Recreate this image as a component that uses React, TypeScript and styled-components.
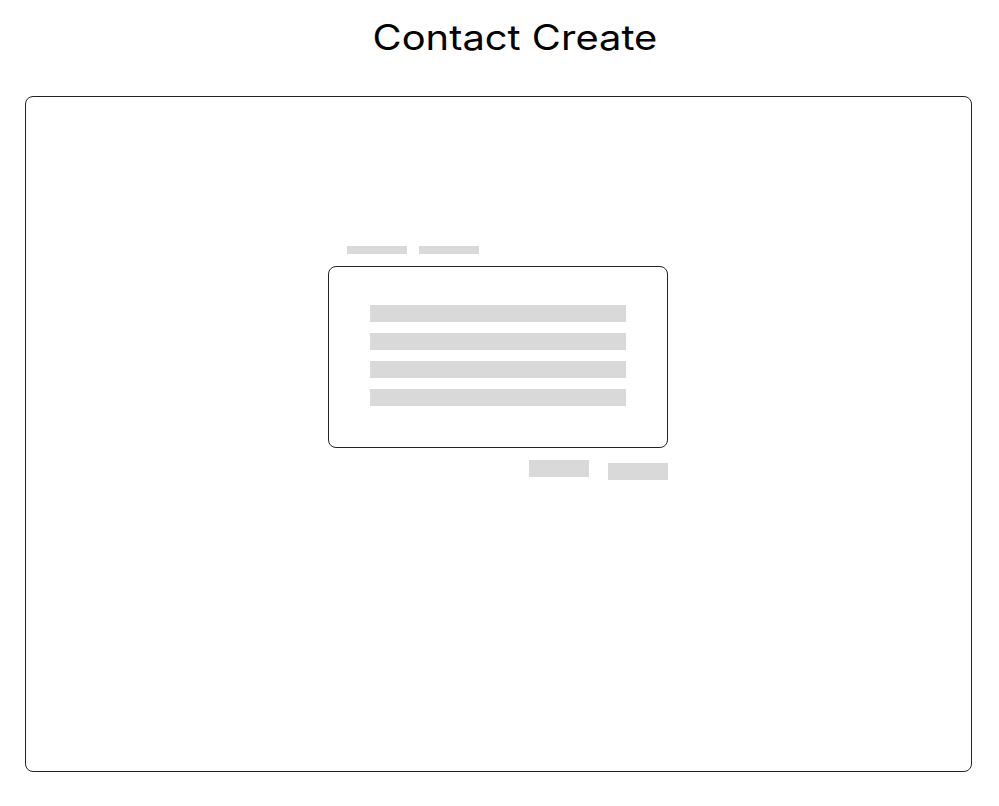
import React from "react";
import styled, { createGlobalStyle } from "styled-components";

const Global = createGlobalStyle`
  html, body { margin: 0; padding: 0; background: #ffffff; }
  body { font-family: Inter, "Noto Sans", sans-serif; color: #000; }
`;

const Page = styled.div`
  width: 999px;
  height: 806px;
  display: flex;
  flex-direction: column;
  overflow: hidden;
`;

const Title = styled.h1`
  align-self: center;
  margin: 15px 0 37px 31px;
  font-family: Inter, sans-serif;
  font-size: 35px;
  font-weight: 400;
  line-height: 44px;
  white-space: nowrap;
  color: #000;
  transform: scaleX(1.14);
  transform-origin: 50% 50%;
`;

const Frame = styled.div`
  box-sizing: border-box;
  margin-left: 25px;
  width: 947px;
  height: 676px;
  border: 1px solid #222;
  border-radius: 8px;
  display: flex;
  justify-content: flex-start;
  padding: 149px 0 0 302px;
`;

const Form = styled.div`
  width: 340px;
  display: flex;
  flex-direction: column;
`;

const TabRow = styled.div`
  display: flex;
  gap: 12px;
  padding-left: 19px;
  margin-bottom: 12px;
`;

const Bar = styled.div<{ $w: number; $h: number; $top?: number }>`
  width: ${(p) => p.$w}px;
  height: ${(p) => p.$h}px;
  margin-top: ${(p) => p.$top ?? 0}px;
  background: #d9d9d9;
  flex: none;
`;

const Card = styled.div`
  box-sizing: border-box;
  height: 182px;
  border: 1px solid #222;
  border-radius: 8px;
  padding: 38px 41px 0;
  display: flex;
  flex-direction: column;
  gap: 11px;
`;

const Field = styled.div`
  height: 17px;
  background: #d9d9d9;
`;

const Actions = styled.div`
  display: flex;
  justify-content: flex-end;
  align-items: flex-start;
  gap: 19px;
  margin-top: 12px;
`;

export default function App() {
  return (
    <>
      <Global />
      <Page>
        <Title>Contact Create</Title>
        <Frame>
          <Form>
            <TabRow>
              <Bar $w={60} $h={8} />
              <Bar $w={60} $h={8} />
            </TabRow>
            <Card>
              <Field />
              <Field />
              <Field />
              <Field />
            </Card>
            <Actions>
              <Bar $w={60} $h={17} />
              <Bar $w={60} $h={17} $top={3} />
            </Actions>
          </Form>
        </Frame>
      </Page>
    </>
  );
}
